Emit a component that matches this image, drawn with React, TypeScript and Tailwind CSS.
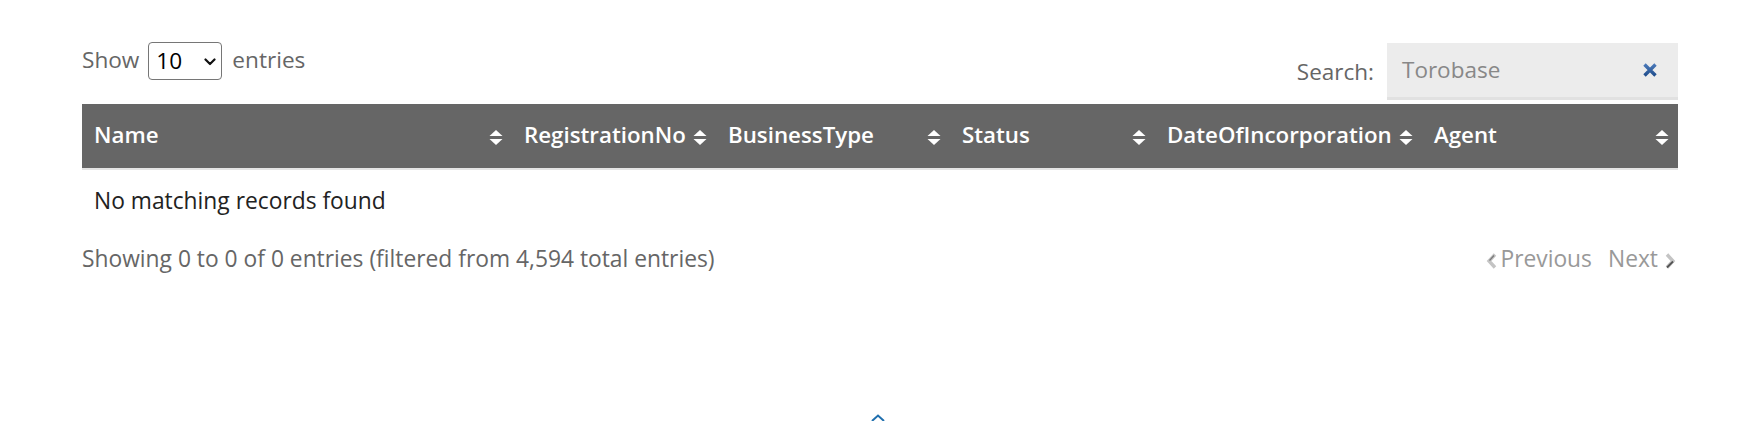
import React from "react";

const SortIcon = () => (
  <svg width="14" height="17" viewBox="0 0 14 17" className="shrink-0">
    <polygon points="7,1 13.5,7 0.5,7" fill="#ffffff" />
    <polygon points="0.5,10 13.5,10 7,16" fill="#ffffff" />
  </svg>
);

const cols = [
  "Name",
  "RegistrationNo",
  "BusinessType",
  "Status",
  "DateOfIncorporation",
  "Agent",
];

export default function App() {
  return (
    <div
      className="relative min-h-[421px] bg-white pl-[82px] pr-[69px] pt-[43px]"
      style={{ fontFamily: '"Open Sans", "Noto Sans", sans-serif' }}
    >
      {/* Top controls */}
      <div className="flex items-start justify-between">
        <div className="flex h-[36px] items-center text-[22.6px] text-[#666666]">
          <span className="-mt-[3px]">Show</span>
          <div className="relative ml-[9px] h-[38px] w-[74px]">
            <select
              className="h-full w-full appearance-none rounded-[4px] border border-[#767676] bg-white pl-[7px] text-[22.6px] leading-none text-black"
              defaultValue="10"
            >
              <option value="10">10</option>
              <option value="25">25</option>
              <option value="50">50</option>
              <option value="100">100</option>
            </select>
            <svg
              width="12"
              height="8"
              viewBox="0 0 12 8"
              className="pointer-events-none absolute left-[56px] top-[16px]"
            >
              <polyline
                points="1.5,1.5 6,6 10.5,1.5"
                fill="none"
                stroke="#111"
                strokeWidth="2.2"
                strokeLinecap="round"
                strokeLinejoin="round"
              />
            </svg>
          </div>
          <span className="-mt-[3px] ml-[10px]">entries</span>
        </div>

        <div className="flex items-center text-[22.5px] text-[#666666]">
          <span className="mr-[13px]">Search:</span>
          <div className="flex h-[57px] w-[291px] items-center border-b-[3px] border-[#e1e1e1] bg-[#ececec] pl-[15px] pr-[20px]">
            <span className="-mt-[1px] flex-1 text-[#888888]">Torobase</span>
            <svg width="16" height="16" viewBox="0 0 16 16">
              <defs>
                <linearGradient id="xg" x1="0" y1="0" x2="0" y2="1">
                  <stop offset="0" stopColor="#4a78b8" />
                  <stop offset="1" stopColor="#214f8e" />
                </linearGradient>
              </defs>
              <path
                d="M2.5 2.5 L13.5 13.5 M13.5 2.5 L2.5 13.5"
                stroke="url(#xg)"
                strokeWidth="3.4"
                strokeLinecap="butt"
              />
            </svg>
          </div>
        </div>
      </div>

      {/* Table header */}
      <div className="mt-[4px] grid h-[64px] grid-cols-[430px_204px_234px_205px_267px_1fr] bg-[#666666] text-[22.3px] font-semibold text-white">
        {cols.map((c) => (
          <div key={c} className="flex items-center justify-between pl-[12px] pr-[9px]">
            <span className="-mt-[3px] whitespace-nowrap">{c}</span>
            <span className="mt-[2px]">
              <SortIcon />
            </span>
          </div>
        ))}
      </div>
      <div className="h-[2px] bg-[#e4e4e4]" />

      {/* Empty row */}
      <div className="flex h-[62px] items-center pl-[12px] text-[22.8px] text-[#222222]">
        No matching records found
      </div>

      {/* Footer */}
      <div className="mt-[10px] flex items-center justify-between text-[22.8px] text-[#666666]">
        <span>Showing 0 to 0 of 0 entries (filtered from 4,594 total entries)</span>
        <div className="flex items-center text-[#999999]">
          <svg width="14" height="18" viewBox="0 0 14 18" className="mr-[1px] mt-[4px]">
            <polyline
              points="10,2.5 4,9 10,15.5"
              fill="none"
              stroke="#c4c4c4"
              strokeWidth="3.4"
              strokeLinejoin="miter"
            />
            <polyline
              points="9,3.5 4.5,8.5"
              fill="none"
              stroke="#7a7a7a"
              strokeWidth="1.2"
            />
          </svg>
          <span>Previous</span>
          <span className="ml-[16px]">Next</span>
          <svg width="16" height="18" viewBox="0 0 16 18" className="ml-[4px] mt-[4px]">
            <polyline
              points="5,2.5 11,9 5,15.5"
              fill="none"
              stroke="#c4c4c4"
              strokeWidth="3.4"
              strokeLinejoin="miter"
            />
            <polyline
              points="11,9.5 5,15.5"
              fill="none"
              stroke="#555"
              strokeWidth="1.8"
            />
          </svg>
        </div>
      </div>

      {/* Back to top caret */}
      <div className="absolute left-[870px] top-[413px]">
        <svg width="16" height="10" viewBox="0 0 16 10">
          <polyline
            points="2,8 8,2.5 14,8"
            fill="none"
            stroke="#1f6fae"
            strokeWidth="2"
          />
        </svg>
      </div>
    </div>
  );
}
